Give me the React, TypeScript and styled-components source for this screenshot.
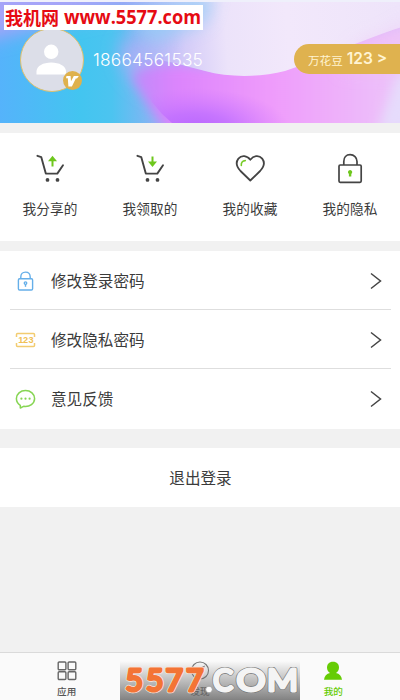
import React from "react";
import styled, { createGlobalStyle } from "styled-components";

const GlobalStyle = createGlobalStyle`
  * { box-sizing: border-box; }
  body { margin: 0; background: #f1f1f1; font-family: "Liberation Sans", "Noto Sans CJK SC", sans-serif; color: #3b3b3b; }
`;

const Screen = styled.main`
  width: 400px; height: 700px; position: relative; overflow: hidden;
  display: flex; flex-direction: column; background: #f1f1f1;
`;
const Header = styled.header`
  height: 123px; flex: none; position: relative; overflow: hidden;
  border-top: 2px solid #eff0fb; display: flex; align-items: flex-start;
`;
const Backdrop = styled.svg`position: absolute; inset: 0; width: 400px; height: 121px;`;
const Avatar = styled.div`
  position: relative; margin: 26px 0 0 20px; width: 64px; height: 64px; flex: none;
  border-radius: 50%; background: #dcdee8; border: 1.5px solid #dfc16d;
  svg { display: block; }
`;
const Badge = styled.span`
  position: absolute; right: 1px; bottom: 1px; width: 19px; height: 19px;
  border-radius: 50%; background: #dfb14c;
`;
const Phone = styled.div`
  position: relative; margin: 46px 0 0 9px; width: 116px; color: #fff; line-height: 24px;
  font-family: Inter, sans-serif; font-size: 17.3px; font-weight: 300; letter-spacing: 0.24px;
`;
const Coins = styled.div`
  position: relative; margin: 42px 0 0 auto; width: 106px; height: 30px; padding: 1px 0 0 14px;
  border-radius: 15px 0 0 15px; background: #dfb24f; color: #fff4d2;
  display: flex; align-items: center; gap: 4px; white-space: nowrap;
  font-size: 11.6px;
  b { font: 600 15.5px/28px Inter, sans-serif; margin-top: -1px; }
`;
const Watermark = styled.div`
  position: absolute; left: 4px; top: 5px; width: 199px; height: 25px; background: #fff;
  svg { display: block; overflow: visible; }
`;
const Shortcuts = styled.section`
  height: 108px; margin-top: 10px; flex: none; background: #fff;
  display: grid; grid-template-columns: repeat(4, 100px);
`;
const Shortcut = styled.div`
  display: flex; flex-direction: column; align-items: center; padding-top: 19px;
  font-size: 13.7px; line-height: 20px; gap: 18px;
  svg { display: block; overflow: visible; }
`;
const List = styled.section`
  margin-top: 10px; height: 178px; flex: none; background: #fff; padding: 0 9px 0 10px;
`;
const Row = styled.div<{ $last?: boolean }>`
  height: 59px; display: flex; align-items: center; padding: 1px 9px 0 5px;
  border-bottom: ${(p) => (p.$last ? "0" : "1px solid #dedede")};
  font-size: 15.6px;
  svg { display: block; flex: none; }
  span { flex: 1; margin: -2px 0 0 15px; }
`;
const Logout = styled.section`
  height: 59px; margin-top: 19px; flex: none; background: #fff; font-size: 15.6px;
  display: flex; align-items: center; justify-content: center; padding: 0 0 1px 1px;
`;
const Tabs = styled.nav`
  height: 48px; margin-top: auto; flex: none; border-top: 1px solid #dadada; background: #fafafa;
  display: grid; grid-template-columns: repeat(3, 1fr);
`;
const Tab = styled.div<{ $active?: boolean }>`
  display: flex; flex-direction: column; align-items: center; padding-top: 7px; gap: 4px;
  font-size: 9.6px; line-height: 14px; font-weight: 500; color: ${(p) => (p.$active ? "#66cc05" : "#555")};
  svg { display: block; }
`;
const SiteMark = styled.div`
  position: absolute; left: 120px; top: 661px; width: 180px; height: 39px;
  background: linear-gradient(rgba(110,110,110,0), rgba(110,110,110,.86));
  svg { display: block; }
`;

const HeaderArt = () => (
  <Backdrop viewBox="0 2 400 121" preserveAspectRatio="none">
    <defs>
      <linearGradient id="sky" x1="0" y1="0" x2="1" y2="0">
        <stop offset="0" stopColor="#55b3fb" /><stop offset=".2" stopColor="#43c5f0" />
        <stop offset=".28" stopColor="#4cc4f0" /><stop offset=".4" stopColor="#8fb2f4" /><stop offset="1" stopColor="#d9b7fb" />
      </linearGradient>
      <linearGradient id="pink" gradientUnits="userSpaceOnUse" x1="120" y1="0" x2="400" y2="0">
        <stop offset="0" stopColor="#b58bf9" /><stop offset=".2" stopColor="#dc84fd" />
        <stop offset=".55" stopColor="#ef9cfb" /><stop offset="1" stopColor="#ecc4f9" />
      </linearGradient>
      <linearGradient id="pale" gradientUnits="userSpaceOnUse" x1="120" y1="50" x2="400" y2="30">
        <stop offset="0" stopColor="#a5b4f5" /><stop offset=".18" stopColor="#ccc4f7" />
        <stop offset=".38" stopColor="#ece3fa" /><stop offset=".6" stopColor="#f2e8fb" /><stop offset="1" stopColor="#eee4fa" />
      </linearGradient>
      <linearGradient id="fade" gradientUnits="userSpaceOnUse" x1="120" y1="0" x2="185" y2="0">
        <stop offset="0" stopColor="#fff" stopOpacity="0" /><stop offset="1" stopColor="#fff" />
      </linearGradient>
      <radialGradient id="violet" gradientUnits="userSpaceOnUse" cx="0" cy="0" r="1" gradientTransform="translate(195 130) scale(95 42)">
        <stop offset="0" stopColor="#b765ff" /><stop offset=".4" stopColor="#bd6dff" stopOpacity=".75" /><stop offset="1" stopColor="#cf78ff" stopOpacity="0" />
      </radialGradient>
      <mask id="paleMask" maskUnits="userSpaceOnUse" x="100" y="0" width="300" height="123">
        <rect x="100" width="300" height="123" fill="url(#fade)" />
      </mask>
      <filter id="soft" x="-50%" y="-50%" width="200%" height="200%"><feGaussianBlur stdDeviation="9" /></filter>
      <filter id="medium" x="-30%" y="-30%" width="160%" height="160%"><feGaussianBlur stdDeviation="6" /></filter>
      <filter id="edge"><feGaussianBlur stdDeviation=".7" /></filter>
    </defs>
    <rect width="400" height="123" fill="url(#sky)" />
    <path d="M-20-20H190V0C120 8 60 22-20 42Z" fill="#a5a4f8" filter="url(#soft)" />
    <path d="M120 45Q160 30 205 46V95H160Q120 80 120 45Z" fill="#a5aff6" filter="url(#soft)" />
    <path d="M132 76Q150 58 205 66L440 20V160H190Q150 115 132 76Z" fill="url(#pink)" filter="url(#medium)" />
    <path d="M140 80H300V123H172Q150 105 140 80Z" fill="url(#violet)" />
    <path d="M120 0H402V27C355 42 320 60 285 71C262 77 230 78 205 71C180 65 150 54 120 60Z" fill="url(#pale)" filter="url(#edge)" mask="url(#paleMask)" />
    <path d="M135 8Q175 0 214 -8L206 22L150 45Z" fill="#94cef6" filter="url(#soft)" opacity=".8" />
    <path d="M358 44Q385 38 410 20V70H340Z" fill="#efc5f7" filter="url(#soft)" opacity=".55" />
    <path d="M378 130L396 78L420 60V130Z" fill="#e6dcfc" filter="url(#medium)" />
  </Backdrop>
);

const Cart = ({ down }: { down?: boolean }) => (
  <svg width="30" height="30" viewBox="0 0 30 30" fill="none">
    <path d="M2.4 3.8L6.3 5.2L10.8 21.6H22.3L28 13.2" stroke="#444" strokeWidth="1.9" strokeLinecap="round" strokeLinejoin="round" />
    <circle cx="12.5" cy="27.9" r="1.9" fill="#444" /><circle cx="22.5" cy="27.9" r="1.9" fill="#444" />
    <path d={down ? "M17.5 4.5V12" : "M17.5 8V14.5"} stroke="#6ec71d" strokeWidth="2" />
    <path d={down ? "M13 9.5L17.5 15L22 9.5Z" : "M13 9.3L17.5 3.8L22 9.3Z"} fill="#6ec71d" />
  </svg>
);
const Heart = () => (
  <svg width="30" height="30" viewBox="0 0 30 30" fill="none">
    <path d="M15.3 28.5L5.5 19C1.3 14.5.8 10 3.4 6.6C6.6 2.8 12 3.4 15.3 7.7C18.6 3.4 24 2.8 27.2 6.6C29.8 10 29.3 14.5 25.1 19Z" stroke="#444" strokeWidth="1.8" strokeLinejoin="round" />
    <path d="M6.3 13.5C6 10.5 7.5 8.8 10.3 8.6" stroke="#77cb28" strokeWidth="1.6" strokeLinecap="round" />
  </svg>
);
const Lock = () => (
  <svg width="30" height="30" viewBox="0 0 30 30" fill="none">
    <rect x="4" y="13" width="22.2" height="17.3" rx="1.2" stroke="#444" strokeWidth="1.7" />
    <path d="M8.8 13V9.4C8.8 5.4 11.2 2.7 15.1 2.7S22 5.4 22 9.4V13" stroke="#444" strokeWidth="1.7" />
    <path d="M15.1 18a2.2 2.2 0 0 1 1.2 4v2.5h-2.4V22a2.2 2.2 0 0 1 1.2-4Z" fill="#6ec71d" />
  </svg>
);
const BlueLock = () => (
  <svg width="21" height="22" viewBox="0 0 21 22" fill="none" stroke="#65afe9" strokeWidth="1.4">
    <rect x="3.4" y="8.8" width="14.2" height="11.2" rx="1.2" /><path d="M5.8 8.8V7C5.8 4 7.5 2.1 10.5 2.1S15.2 4 15.2 7V8.8" />
    <circle cx="10.5" cy="13.1" r="1.25" /><path d="M10.5 14.3V16.8" />
  </svg>
);
const Ticket = () => (
  <svg width="21" height="20" viewBox="0 0 21 20" fill="none">
    <path d="M1.5 7V4.5Q1.5 3.5 2.5 3.5H18.5Q19.5 3.5 19.5 4.5V7M1.5 13V15.5Q1.5 16.5 2.5 16.5H18.5Q19.5 16.5 19.5 15.5V13" stroke="#f2cc70" strokeWidth="1.5" />
    <text x="3.2 8.1 13.4" y="13.3" fill="#f0bf55" fontFamily="Liberation Sans, sans-serif" fontSize="9.2" fontWeight="700">123</text>
  </svg>
);
const Chat = () => (
  <svg width="21" height="20" viewBox="0 0 21 20" fill="none">
    <path d="M5.3 16.3V19L8.6 17.3C14.9 18.2 19.6 14.3 19.6 9.5C19.6 5 15.6 1.5 10.5 1.5S1.4 5 1.4 9.5C1.4 12.4 3 14.8 5.3 16.3Z" stroke="#86d553" strokeWidth="1.5" strokeLinejoin="round" />
    <circle cx="6.4" cy="9.7" r="1.1" fill="#86d553" /><circle cx="10.5" cy="9.7" r="1.1" fill="#86d553" /><circle cx="14.6" cy="9.7" r="1.1" fill="#86d553" />
  </svg>
);
const Chevron = () => (
  <svg width="12" height="18" viewBox="0 0 12 18" fill="none"><path d="M1 1.5L10.5 9L1 16.5" stroke="#444" strokeWidth="1.5" /></svg>
);

const Domain = ({ color, width }: { color: string; width: number }) => (
  <g fill="#f4f4f4" stroke={color} strokeWidth={width}>
    <text x="93" y="30.3">C</text>
    <text x="116.5" y="30.3" textLength="29" lengthAdjust="spacingAndGlyphs">O</text>
    <text x="147" y="30.3" textLength="31" lengthAdjust="spacingAndGlyphs">M</text>
  </g>
);

const shortcuts = [
  { label: "我分享的", icon: <Cart /> }, { label: "我领取的", icon: <Cart down /> },
  { label: "我的收藏", icon: <Heart /> }, { label: "我的隐私", icon: <Lock /> },
];
const settings = [
  { label: "修改登录密码", icon: <BlueLock /> }, { label: "修改隐私密码", icon: <Ticket /> },
  { label: "意见反馈", icon: <Chat /> },
];

export default function App() {
  return (
    <><GlobalStyle />
      <Screen>
        <Header>
          <HeaderArt />
          <Avatar>
            <svg width="61" height="61" viewBox="0 0 61 61" fill="#fff"><circle cx="30.2" cy="22.8" r="7.2" /><path d="M15.5 45.5V42C16 37 22 33.5 30.2 33.5S44.5 37 45 42V45.5Z" /></svg>
            <Badge><svg width="19" height="19" viewBox="0 0 19 19"><path d="M3.5 5H7.6L8 10.3L10.8 5H15.8L14 7.4H12.8L8.9 15.5H5.4L4.8 7.2H3Z" fill="#fff" /></svg></Badge>
          </Avatar>
          <Phone>18664561535</Phone>
          <Coins>万花豆 <b>123 &gt;</b></Coins>
        </Header>
        <Shortcuts>{shortcuts.map((s) => <Shortcut key={s.label}>{s.icon}{s.label}</Shortcut>)}</Shortcuts>
        <List>{settings.map((s, i) => <Row key={s.label} $last={i === 2}>{s.icon}<span>{s.label}</span><Chevron /></Row>)}</List>
        <Logout>退出登录</Logout>
        <Tabs>
          <Tab><svg width="20" height="21" viewBox="0 0 20 21" fill="none" stroke="#666" strokeWidth="1.4"><rect x="1.2" y="2" width="7.7" height="7.7" rx="1" /><rect x="11.1" y="2" width="7.7" height="7.7" rx="1" /><rect x="1.2" y="11.8" width="7.7" height="7.7" rx="1" /><rect x="11.1" y="11.8" width="7.7" height="7.7" rx="1" /></svg>应用</Tab>
          <Tab><svg width="20" height="21" viewBox="0 0 20 21" fill="none" stroke="#777" strokeWidth="1.1"><circle cx="10" cy="10.5" r="8.5" /><path d="M14 6.5L11.5 12L6 14.5L8.5 9Z" /></svg>发现</Tab>
          <Tab $active><svg width="20" height="21" viewBox="0 0 20 21" fill="#66cc05"><path d="M10 1.8c4 0 6 2.6 6 5.8 0 2.4-1.2 4.3-3 5.4 3.4.7 5.6 2.9 6 6.7H1c.4-3.8 2.6-6 6-6.7-1.8-1.1-3-3-3-5.4 0-3.2 2-5.8 6-5.8Z" /></svg>我的</Tab>
        </Tabs>
        <Watermark>
          <svg width="199" height="25" viewBox="0 0 199 25" fill="#e60b13" fontWeight="700">
            <text x="1" y="20" fontSize="18" textLength="54" lengthAdjust="spacingAndGlyphs" fontFamily="Noto Sans CJK SC, sans-serif">我机网</text>
            <text x="60" y="18.5" fontSize="19.5" textLength="137" lengthAdjust="spacingAndGlyphs" fontFamily="Open Sans, sans-serif">www.5577.com</text>
          </svg>
        </Watermark>
        <SiteMark>
          <svg width="180" height="39" viewBox="0 0 180 39" fontFamily="Lato, sans-serif" fontWeight="400" fontSize="30" strokeLinejoin="round">
            <text x="5.5 26 45.5 66" y="30.3" fill="#f37435" stroke="#f8e9e1" strokeWidth="4.6">5577</text>
            <text x="5.5 26 45.5 66" y="30.3" fill="#f37435" stroke="#f37435" strokeWidth="3.2">5577</text>
            <circle cx="89" cy="28.5" r="3.3" fill="#fff" stroke="#888" strokeWidth=".6" />
            <Domain color="#777" width={4.2} />
            <Domain color="#f4f4f4" width={3} />
          </svg>
        </SiteMark>
      </Screen>
    </>
  );
}
